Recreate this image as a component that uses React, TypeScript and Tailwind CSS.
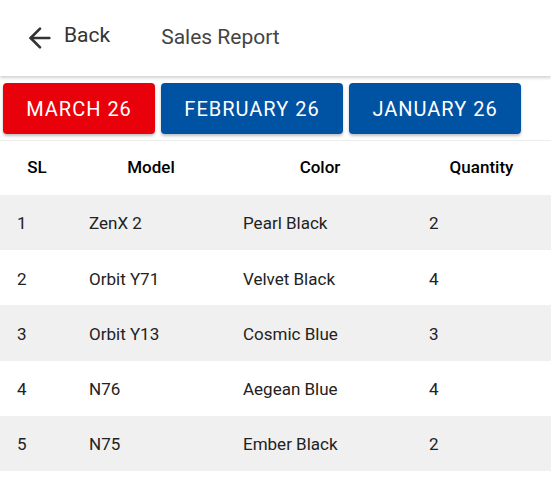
import { ArrowLeft } from 'lucide-react'

const rows = [
  { sl: 1, model: 'ZenX 2', color: 'Pearl Black', qty: 2 },
  { sl: 2, model: 'Orbit Y71', color: 'Velvet Black', qty: 4 },
  { sl: 3, model: 'Orbit Y13', color: 'Cosmic Blue', qty: 3 },
  { sl: 4, model: 'N76', color: 'Aegean Blue', qty: 4 },
  { sl: 5, model: 'N75', color: 'Ember Black', qty: 2 },
]

const months = [
  { label: 'MARCH 26', w: 'w-[152px]', bg: 'bg-[#e8000b]' },
  { label: 'FEBRUARY 26', w: 'w-[182px]', bg: 'bg-[#0052a3]' },
  { label: 'JANUARY 26', w: 'w-[172px]', bg: 'bg-[#0052a3]' },
]

export default function App() {
  return (
    <div className="w-[551px] h-[480px] bg-white font-['Roboto',sans-serif] overflow-hidden">
      {/* top bar */}
      <div className="h-[76px] flex items-center shadow-[0_2px_3px_rgba(0,0,0,0.18)] relative z-10">
        <button className="flex items-center pl-[24px] text-[#333] text-[20px]">
          <ArrowLeft className="w-[32px] h-[32px]" strokeWidth={2} />
          <span className="ml-[8px] -mt-[4px] text-[21px]">Back</span>
        </button>
        <span className="ml-[51px] text-[21px] text-[#444]">Sales Report</span>
      </div>

      <div className="flex gap-[6px] px-[3px] pt-[7px] pb-[6px] border-b border-[#ececec]">
        {months.map((m) => (
          <button
            key={m.label}
            className={`${m.w} ${m.bg} h-[51px] rounded-[4px] text-white text-[20px] tracking-[1px] shadow-[0_2px_3px_rgba(0,0,0,0.25)]`}
          >
            {m.label}
          </button>
        ))}
      </div>

      <div className="grid grid-cols-[74px_154px_184px_139px] h-[54px] items-center text-[17px] font-medium text-black text-center">
        <div>SL</div>
        <div>Model</div>
        <div>Color</div>
        <div>Quantity</div>
      </div>

      {rows.map((r, i) => (
        <div
          key={r.sl}
          className={`grid grid-cols-[74px_154px_184px_139px] h-[55.2px] pt-[3px] items-center text-[17px] text-[#222] ${
            i % 2 === 0 ? 'bg-[#f1f0f0]' : 'bg-white'
          }`}
        >
          <div className="pl-[17px]">{r.sl}</div>
          <div className="pl-[15px]">{r.model}</div>
          <div className="pl-[15px]">{r.color}</div>
          <div className="pl-[17px]">{r.qty}</div>
        </div>
      ))}
    </div>
  )
}
